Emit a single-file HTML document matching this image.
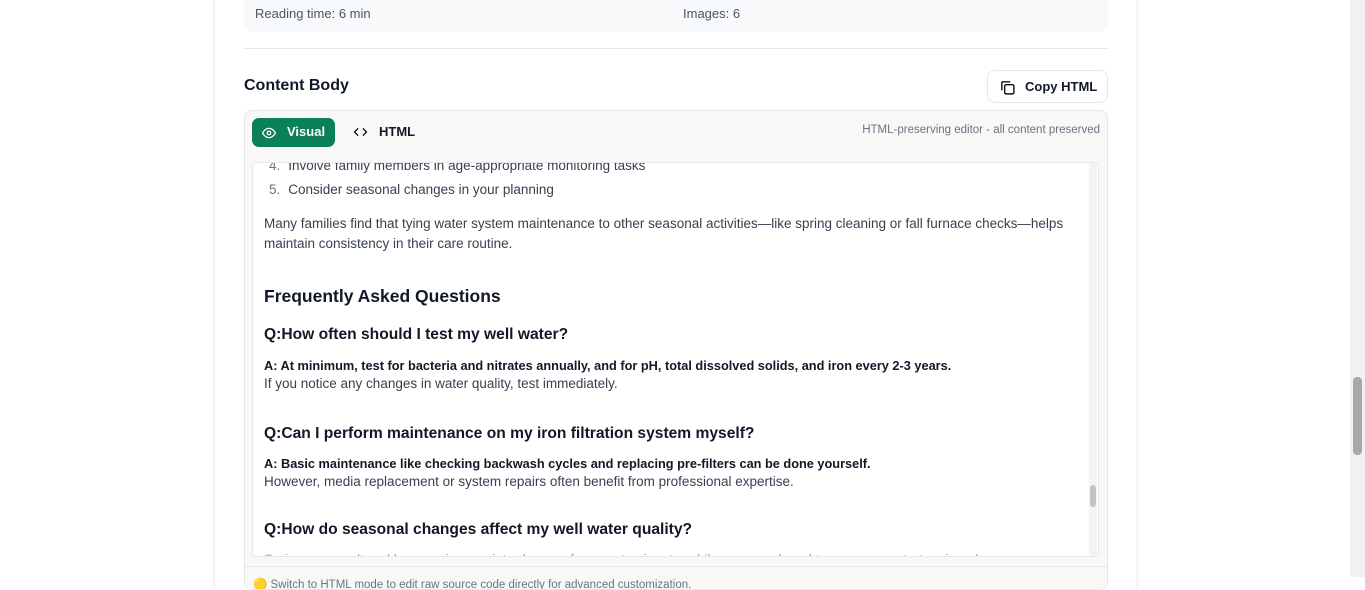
<!DOCTYPE html>
<html><head><meta charset="utf-8"><style>
*{box-sizing:border-box;margin:0;padding:0}
body{width:1365px;height:577px;overflow:hidden;background:#fff;font-family:"Liberation Sans",Arial,sans-serif;color:#111827;position:relative}
.card{position:absolute;left:215px;top:-10px;width:921px;height:600px;background:#fff;box-shadow:0 0 4px rgba(0,0,0,.12)}
.stats{position:absolute;left:244px;top:-10px;width:864px;height:42px;background:#f8f9fa;border-radius:0 0 8px 8px;font-size:13px;color:#4b5563}
.stats span{position:absolute;top:14px}
.hr{position:absolute;left:244px;top:48px;width:864px;height:1px;background:#e5e7eb}
.title{position:absolute;left:244px;top:77px;font-size:16px;font-weight:bold}
.copy{position:absolute;left:987px;top:70px;width:121px;height:33px;border:1px solid #e5e7eb;border-radius:8px;font-size:13px;font-weight:bold;color:#111827}
.copy svg{position:absolute;left:11px;top:8px}
.copy span{position:absolute;left:37px;top:8px}
.editor{position:absolute;left:244px;top:110px;width:864px;height:480px;border:1px solid #e5e7eb;border-radius:8px;background:#f8f8f7;overflow:hidden}
.vis{position:absolute;left:7px;top:7px;width:83px;height:29px;background:#0b7f55;border-radius:7px;color:#fff;font-size:13px;font-weight:bold}
.vis svg{position:absolute;left:10px;top:9px}
.vis span{position:absolute;left:35px;top:6px}
.htm{position:absolute;left:108px;top:13px;font-size:13px;font-weight:bold}
.htm svg{position:absolute;left:0;top:2px}
.htm span{position:absolute;left:26px;top:0}
.note{position:absolute;right:7px;top:13px;font-size:11.5px;color:#6b7280}
.inner{position:absolute;left:7px;top:51px;width:847px;height:395px;background:#fff;border:1px solid #e5e7eb;border-radius:4px;overflow:hidden}
.sb{position:absolute;right:1px;top:0;width:8px;height:100%;background:#f3f3f3}
.sb i{position:absolute;left:1px;top:322px;width:6px;height:22px;background:#c4c4c4;border-radius:3px}
.t{position:absolute;left:11px;white-space:nowrap;font-size:13.5px;color:#374151}
.li{left:16px}
.li b{font-weight:normal;color:#6b7280;margin-right:8px}
.h2{font-size:17.5px;font-weight:bold;color:#111827}
.h3{font-size:15.6px;font-weight:bold;color:#111827}
.ab{font-weight:bold;color:#111827;font-size:12.75px}
.foot{position:absolute;left:0;top:455px;width:100%;height:30px;border-top:1px solid #e5e7eb;background:#f8f8f7}
.pg{position:absolute;right:0;top:0;width:15px;height:577px;background:#f1f1f1}
.pg i{position:absolute;left:3px;top:377px;width:9px;height:78px;background:#a8a8a8;border-radius:4px}
</style></head><body>
<div class="card"></div>
<div class="stats"><span style="left:11px;top:16px">Reading time: 6 min</span><span style="left:439px;top:16px">Images: 6</span></div>
<div class="hr"></div>
<div class="title">Content Body</div>
<div class="copy"><svg width="17" height="17" viewBox="0 0 24 24" fill="none" stroke="#111" stroke-width="2"><rect x="8" y="8" width="13" height="13" rx="2"/><path d="M4 16V5a1 1 0 0 1 1-1h11"/></svg><span>Copy HTML</span></div>
<div class="editor">
<div class="vis"><svg width="14" height="12" viewBox="0 0 24 20" fill="none" stroke="#fff" stroke-width="2.2"><path d="M1 10s4-8 11-8 11 8 11 8-4 8-11 8S1 10 1 10z"/><circle cx="12" cy="10" r="3"/></svg><span>Visual</span></div>
<div class="htm"><svg width="15" height="12" viewBox="0 0 24 20" fill="none" stroke="#111" stroke-width="2.2"><path d="M8 4l-6 6 6 6M16 4l6 6-6 6"/></svg><span>HTML</span></div>
<div class="note">HTML-preserving editor - all content preserved</div>
<div class="inner">
<div class="t li" style="top:-5px"><b>4.</b>Involve family members in age-appropriate monitoring tasks</div>
<div class="t li" style="top:19px"><b>5.</b>Consider seasonal changes in your planning</div>
<div class="t" style="top:53px">Many families find that tying water system maintenance to other seasonal activities—like spring cleaning or fall furnace checks—helps</div>
<div class="t" style="top:73px">maintain consistency in their care routine.</div>
<div class="t h2" style="top:123px">Frequently Asked Questions</div>
<div class="t h3" style="top:163px">Q:How often should I test my well water?</div>
<div class="t ab" style="top:195px">A: At minimum, test for bacteria and nitrates annually, and for pH, total dissolved solids, and iron every 2-3 years.</div>
<div class="t" style="top:213px">If you notice any changes in water quality, test immediately.</div>
<div class="t h3" style="top:262px">Q:Can I perform maintenance on my iron filtration system myself?</div>
<div class="t ab" style="top:293px">A: Basic maintenance like checking backwash cycles and replacing pre-filters can be done yourself.</div>
<div class="t" style="top:311px">However, media replacement or system repairs often benefit from professional expertise.</div>
<div class="t h3" style="top:358px">Q:How do seasonal changes affect my well water quality?</div>
<div class="t" style="top:389px;color:#9ca3af">Spring snowmelt and heavy rains can introduce surface contaminants, while summer droughts may concentrate minerals.</div>
<div class="sb"><i></i></div>
</div>
<div class="foot"><div class="t" style="left:8px;top:10px;font-size:11.5px;color:#6b7280">🟡 Switch to HTML mode to edit raw source code directly for advanced customization.</div></div>
</div>
<div class="pg"><i></i></div>
</body></html>
